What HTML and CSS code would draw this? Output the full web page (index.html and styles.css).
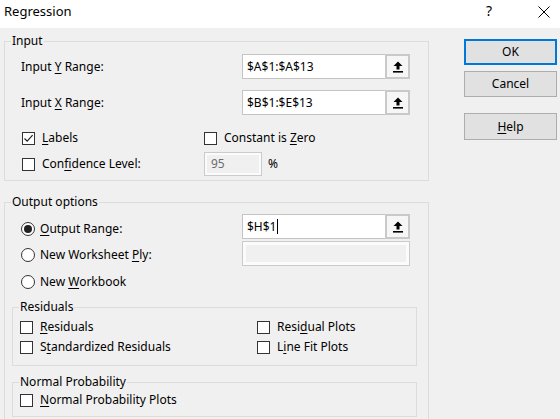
FILE: index.html
```html
<!DOCTYPE html>
<html>
<head>
<meta charset="utf-8">
<link rel="stylesheet" href="styles.css">
</head>
<body>
<div class="dialog">
  <header class="titlebar">
    <span class="title">Regression</span>
    <div class="title-controls">
      <span class="help-q">?</span>
      <svg class="close-x" width="12" height="12" viewBox="0 0 12 12"><path d="M0.5 0.5 L11.5 11.5 M11.5 0.5 L0.5 11.5" stroke="#000" stroke-width="1" fill="none"/></svg>
    </div>
  </header>
  <div class="body">
    <div class="main">
      <fieldset class="group group-input">
        <legend>Input</legend>
        <div class="input-content">
          <div class="range-row">
            <span class="range-label">Input <u>Y</u> Range:</span>
            <div class="refedit">
              <span class="ref-text">$A$1:$A$13</span>
              <span class="ref-btn"><svg width="10" height="12" viewBox="0 0 10 12"><path d="M5 0.5 L9.5 5 H6.5 V8.5 H3.5 V5 H0.5 Z" fill="#000"/><rect x="0" y="10" width="10" height="1.6" fill="#000"/></svg></span>
            </div>
          </div>
          <div class="range-row row-x">
            <span class="range-label">Input <u>X</u> Range:</span>
            <div class="refedit">
              <span class="ref-text">$B$1:$E$13</span>
              <span class="ref-btn"><svg width="10" height="12" viewBox="0 0 10 12"><path d="M5 0.5 L9.5 5 H6.5 V8.5 H3.5 V5 H0.5 Z" fill="#000"/><rect x="0" y="10" width="10" height="1.6" fill="#000"/></svg></span>
            </div>
          </div>
          <div class="check-row">
            <span class="check-item first-col"><span class="cbox"><svg width="11" height="11" viewBox="0 0 11 11"><path d="M1.5 5.5 L4.2 8.2 L9.6 2.2" stroke="#222" stroke-width="1.2" fill="none"/></svg></span><span><u>L</u>abels</span></span>
            <span class="check-item"><span class="cbox"></span><span>Constant is <u>Z</u>ero</span></span>
          </div>
          <div class="conf-row">
            <span class="check-item first-col"><span class="cbox"></span><span>Con<u>f</u>idence Level:</span></span>
            <span class="field-disabled small">95</span>
            <span class="pct">%</span>
          </div>
        </div>
      </fieldset>

      <fieldset class="group group-output">
        <legend>Output options</legend>
        <div class="output-content">
          <div class="out-grid">
            <span class="radio-item r1"><span class="radio on"></span><span><u>O</u>utput Range:</span></span>
            <div class="refedit r1f">
              <span class="ref-text">$H$1<span class="caret"></span></span>
              <span class="ref-btn"><svg width="10" height="12" viewBox="0 0 10 12"><path d="M5 0.5 L9.5 5 H6.5 V8.5 H3.5 V5 H0.5 Z" fill="#000"/><rect x="0" y="10" width="10" height="1.6" fill="#000"/></svg></span>
            </div>
            <span class="radio-item r2"><span class="radio"></span><span>New Worksheet <u>P</u>ly:</span></span>
            <div class="field-disabled wide r2f"></div>
            <span class="radio-item r3"><span class="radio"></span><span>New <u>W</u>orkbook</span></span>
          </div>

          <fieldset class="group group-sub group-resid">
            <legend>Residuals</legend>
            <div class="resid-grid">
              <span class="check-item"><span class="cbox"></span><span><u>R</u>esiduals</span></span>
              <span class="check-item"><span class="cbox"></span><span>Resi<u>d</u>ual Plots</span></span>
              <span class="check-item"><span class="cbox"></span><span>S<u>t</u>andardized Residuals</span></span>
              <span class="check-item"><span class="cbox"></span><span>L<u>i</u>ne Fit Plots</span></span>
            </div>
          </fieldset>

          <fieldset class="group group-sub group-normal">
            <legend>Normal Probability</legend>
            <div class="normal-content">
              <span class="check-item"><span class="cbox"></span><span><u>N</u>ormal Probability Plots</span></span>
            </div>
          </fieldset>
        </div>
      </fieldset>
    </div>

    <div class="buttons">
      <div class="btn btn-default">OK</div>
      <div class="btn">Cancel</div>
      <div class="btn btn-help"><span><u>H</u>elp</span></div>
    </div>
  </div>
</div>
</body>
</html>
```

FILE: styles.css
```css
html, body {
  margin: 0;
  padding: 0;
}
body {
  width: 560px;
  height: 419px;
  overflow: hidden;
  background: #f0f0f0;
  font-family: "Noto Sans", "DejaVu Sans", sans-serif;
  font-size: 12px;
  line-height: 16px;
  color: #000;
}
u {
  text-decoration: underline;
  text-underline-offset: 2px;
  text-decoration-thickness: 1px;
}

/* title bar */
.titlebar {
  height: 28px;
  box-sizing: border-box;
  background: #fff;
  display: flex;
  align-items: flex-start;
  padding: 2px 10px 0 4px;
}
.title {
  font-size: 13px;
  line-height: 18px;
}
.title-controls {
  margin-left: auto;
  display: flex;
  align-items: flex-start;
}
.help-q {
  font-size: 14px;
  line-height: 18px;
  margin-right: 46px;
  margin-top: 0;
}
.close-x {
  margin-top: 4px;
}

/* body layout */
.body {
  display: flex;
  align-items: flex-start;
}
.main {
  margin-left: 4px;
  width: 425px;
}

.group {
  margin: 0;
  padding: 0;
  border: 1px solid #dcdcdc;
  box-sizing: border-box;
  min-width: 0;
}
.group legend {
  padding: 0 1px;
  margin-left: 6px;
  line-height: 16px;
}

/* input group */
.group-input {
  margin-top: 5px;
  width: 425px;
}
.input-content {
  padding: 5px 0 4px 16px;
}
.range-row {
  display: flex;
  align-items: center;
  height: 25px;
}
.row-x {
  margin-top: 11px;
}
.range-label {
  width: 221px;
}
.refedit {
  width: 168px;
  height: 25px;
  box-sizing: border-box;
  border: 1px solid #c4c4c4;
  background: #fff;
  display: flex;
  align-items: center;
}
.ref-text {
  flex: 1;
  padding-left: 4px;
  display: flex;
  align-items: center;
}
.caret {
  display: inline-block;
  width: 1px;
  height: 15px;
  background: #000;
  margin-left: 1px;
}
.ref-btn {
  width: 25px;
  height: 25px;
  margin: -1px -1px -1px 0;
  box-sizing: border-box;
  border: 2px solid #c9c9c9;
  background: #f6f6f6;
  display: flex;
  align-items: center;
  justify-content: center;
}
.ref-btn svg {
  display: block;
}

.check-row {
  display: flex;
  align-items: center;
  height: 16px;
  margin-top: 15px;
  padding-left: 1px;
}
.conf-row {
  display: flex;
  align-items: center;
  height: 24px;
  margin-top: 6px;
  padding-left: 1px;
}
.first-col {
  width: 182px;
}
.check-item {
  display: flex;
  align-items: center;
  gap: 7px;
}
.cbox {
  width: 13px;
  height: 13px;
  box-sizing: border-box;
  border: 1px solid #333;
  background: #fff;
  display: flex;
  align-items: center;
  justify-content: center;
}
.cbox svg {
  display: block;
}

.field-disabled {
  box-sizing: border-box;
  border: 1px solid #cbcbcb;
  background: #f0f0f0;
  box-shadow: inset 0 0 0 2px #fbfbfb;
  color: #6d6d6d;
}
.field-disabled.small {
  width: 58px;
  height: 24px;
  padding-left: 6px;
  line-height: 22px;
}
.pct {
  margin-left: 6px;
}

/* output group */
.group-output {
  margin-top: 13px;
  width: 425px;
}
.output-content {
  padding: 4px 10px 6px 7px;
}
.out-grid {
  display: grid;
  grid-template-columns: 221px 168px;
  grid-template-rows: 25px 25px 22px;
  row-gap: 2px;
  padding-left: 9px;
}
.radio-item {
  display: flex;
  align-items: center;
  gap: 5px;
  align-self: start;
}
.r1 { grid-row: 1; grid-column: 1; margin-top: 7px; }
.r1f { grid-row: 1; grid-column: 2; }
.r2 { grid-row: 2; grid-column: 1; margin-top: 6px; }
.r2f { grid-row: 2; grid-column: 2; }
.r3 { grid-row: 3; grid-column: 1; margin-top: 6px; }
.field-disabled.wide {
  width: 168px;
  height: 25px;
  box-shadow: inset 0 0 0 3px #fbfbfb;
}
.radio {
  width: 14px;
  height: 14px;
  box-sizing: border-box;
  border: 1px solid #333;
  border-radius: 50%;
  background: #fff;
  display: flex;
  align-items: center;
  justify-content: center;
}
.radio.on::after {
  content: "";
  width: 8px;
  height: 8px;
  border-radius: 50%;
  background: #222;
}

.group-sub {
  width: 405px;
}
.group-resid {
  margin-top: 9px;
}
.resid-grid {
  display: grid;
  grid-template-columns: 237px auto;
  grid-auto-rows: 16px;
  row-gap: 4px;
  padding: 4px 0 10px 7px;
}
.group-normal {
  margin-top: 8px;
}
.normal-content {
  padding: 2px 0 8px 7px;
}

/* buttons */
.buttons {
  margin-left: 35px;
  margin-top: 11px;
  display: flex;
  flex-direction: column;
  width: 93px;
}
.btn {
  width: 93px;
  height: 26px;
  box-sizing: border-box;
  border: 1px solid #adadad;
  background: #e1e1e1;
  display: flex;
  align-items: center;
  justify-content: center;
  margin-top: 6px;
}
.btn-default {
  margin-top: 0;
  border: 2px solid #0078d7;
}
.btn-help {
  margin-top: 16px;
  height: 27px;
}
```
